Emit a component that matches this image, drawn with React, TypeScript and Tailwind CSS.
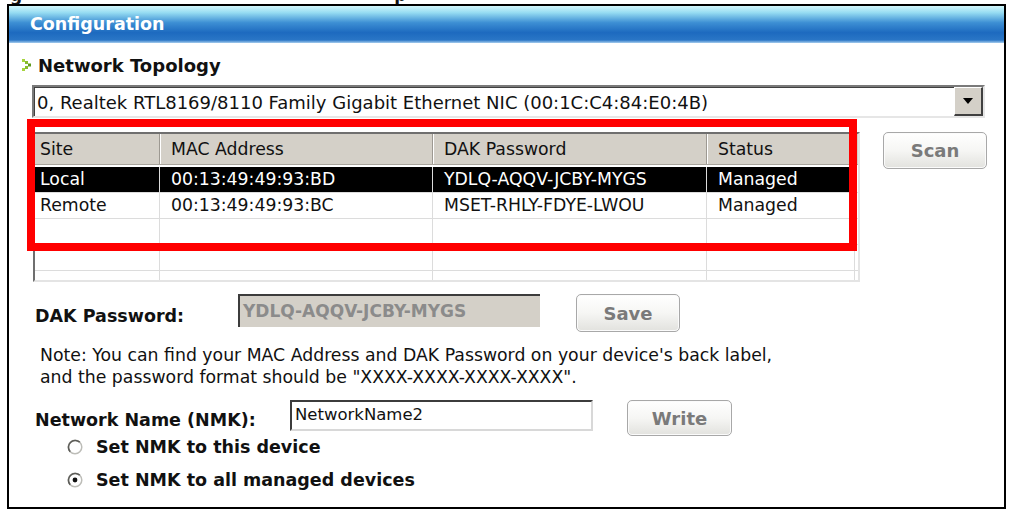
import React from "react";

type Device = {
  site: string;
  mac: string;
  dak: string;
  status: string;
  selected?: boolean;
};

const devices: Device[] = [
  { site: "Local", mac: "00:13:49:49:93:BD", dak: "YDLQ-AQQV-JCBY-MYGS", status: "Managed", selected: true },
  { site: "Remote", mac: "00:13:49:49:93:BC", dak: "MSET-RHLY-FDYE-LWOU", status: "Managed" },
];

function XpButton({ label, className }: { label: string; className: string }) {
  return (
    <button
      className={`flex items-center justify-center rounded-[5px] border border-[#a8a8a8] bg-gradient-to-b from-white via-[#f6f6f4] to-[#e2e2de] text-[18px] font-bold text-[#7a7a7a] shadow-[inset_0_0_0_1px_#fbfbfb] ${className}`}
    >
      {label}
    </button>
  );
}

function Radio({ checked }: { checked?: boolean }) {
  return (
    <svg width="16" height="16" viewBox="0 0 16 16" className="shrink-0">
      <circle cx="8" cy="8" r="6.8" fill="#fff" stroke="#bdbdb8" strokeWidth="1.5" />
      <path d="M3.2 12.8 A6.8 6.8 0 0 1 12.8 3.2" fill="none" stroke="#5c5c58" strokeWidth="1.6" />
      {checked && <circle cx="8" cy="8" r="2.4" fill="#111" />}
    </svg>
  );
}

function TopologyIcon() {
  return (
    <svg width="10" height="12" viewBox="0 0 10 12" className="shrink-0">
      <rect x="0" y="0" width="3" height="3" fill="#a6d43e" />
      <rect x="3" y="2" width="3" height="3" fill="#86bc2c" />
      <rect x="6" y="4.5" width="3" height="3" fill="#5e9a1c" />
      <rect x="3" y="7" width="3" height="3" fill="#86bc2c" />
      <rect x="0" y="9" width="3" height="3" fill="#a6d43e" />
    </svg>
  );
}

function HeaderCell({ label, className }: { label: string; className: string }) {
  return (
    <div
      className={`flex h-full items-center pt-[2px] border-r border-r-[#9d9992] shadow-[1px_0_0_#ffffff] ${className}`}
    >
      {label}
    </div>
  );
}

function DeviceRow({ device }: { device?: Device }) {
  const sel = device?.selected;
  const cell = `flex h-full items-center border-r border-r-[#dcdcdc] ${sel ? "bg-black text-white" : ""}`;
  return (
    <div className="flex h-[26px] shrink-0 border-b border-b-[#dcdcdc]">
      <div className={`${cell} w-[125px] pl-[5px]`}>{device?.site}</div>
      <div className={`${cell} w-[273px] pl-[11px]`}>{device?.mac}</div>
      <div className={`${cell} w-[274px] pl-[11px]`}>{device?.dak}</div>
      <div className={`${cell} w-[148px] pl-[11px]`}>{device?.status}</div>
      <div className="flex-1" />
    </div>
  );
}

export default function App() {
  return (
    <div className="relative h-[512px] w-[1012px] overflow-hidden bg-white font-['DejaVu_Sans',Verdana,sans-serif] text-[17.3px] text-[#111]">
      {/* tail of the caption line above the panel */}
      <div className="flex h-[4px] overflow-hidden text-[17px] font-bold leading-none">
        <span className="-mt-[13px] ml-[10px]">g</span>
        <span className="-mt-[13px] ml-[372px]">p</span>
      </div>

      <div className="ml-[7px] flex h-[505px] w-[999px] flex-col border-2 border-black">
        {/* title bar */}
        <div className="flex h-[37px] shrink-0 items-center bg-[linear-gradient(to_bottom,#d2f6fb_0%,#96dcf2_18%,#3d8fd4_45%,#1d6abf_72%,#2a76c6_92%,#a6cdee_100%)] pl-[21px] text-[17.5px] font-bold text-white">
          Configuration
        </div>

        <div className="flex flex-1 flex-col">
          {/* Network Topology */}
          <div className="mt-[11px] flex h-[22px] items-center gap-[6px] pl-[13px] text-[18px] font-bold">
            <TopologyIcon />
            <span>Network Topology</span>
          </div>

          {/* adapter dropdown */}
          <div className="ml-[23px] mt-[9px] flex h-[33px] w-[953px] border-2 border-[#7a7a7a] border-b-[#e6e6e6] border-r-[#e6e6e6] bg-white">
            <div className="flex flex-1 items-center border-l border-t border-[#404040] pl-[2px] text-[18px]">
              0, Realtek RTL8169/8110 Family Gigabit Ethernet NIC (00:1C:C4:84:E0:4B)
            </div>
            <div className="flex w-[29px] items-center justify-center border-b-2 border-r-2 border-[#404040] border-l-white border-t-white bg-[#d4d0c8] border-l border-t">
              <svg width="10" height="6" viewBox="0 0 10 6">
                <path d="M0 0 H10 L5 6 Z" fill="#000" />
              </svg>
            </div>
          </div>

          {/* device list + scan */}
          <div className="mt-[14px] flex items-start">
            <div className="ml-[24px] flex h-[150px] w-[827px] flex-col overflow-hidden border-2 border-[#6f6f6f] border-b-[#e4e4e4] border-r-[#e4e4e4] bg-white">
              <div className="flex h-[31px] shrink-0 border-b border-b-[#a9a59d] bg-[#d4d0c8]">
                <HeaderCell label="Site" className="w-[125px] pl-[5px]" />
                <HeaderCell label="MAC Address" className="w-[273px] pl-[11px]" />
                <HeaderCell label="DAK Password" className="w-[274px] pl-[11px]" />
                <HeaderCell label="Status" className="w-[148px] pl-[11px]" />
                <div className="flex-1" />
              </div>
              <div className="h-[2px] shrink-0" />
              {devices.map((d) => (
                <DeviceRow key={d.mac} device={d} />
              ))}
              <DeviceRow />
              <DeviceRow />
              <DeviceRow />
            </div>
            <XpButton label="Scan" className="ml-[23px] h-[37px] w-[104px]" />
          </div>

          {/* DAK password */}
          <div className="mt-[12px] flex items-start">
            <div className="ml-[26px] mt-[9px] w-[203px] text-[17.5px] font-bold">DAK Password:</div>
            <div className="flex h-[33px] w-[302px] items-center border-l-2 border-t-2 border-[#3c3c3c] bg-[#d4d0c8] pl-[3px] text-[17px] font-bold text-[#8b8b8b]">
              YDLQ-AQQV-JCBY-MYGS
            </div>
            <XpButton label="Save" className="ml-[36px] h-[38px] w-[104px]" />
          </div>

          {/* note */}
          <div className="ml-[31px] mt-[12px] leading-[22px]">
            <p>Note: You can find your MAC Address and DAK Password on your device's back label,</p>
            <p>and the password format should be "XXXX-XXXX-XXXX-XXXX".</p>
          </div>

          {/* network name */}
          <div className="mt-[12px] flex items-start">
            <div className="ml-[26px] mt-[7px] w-[255px] text-[17.5px] font-bold">Network Name (NMK):</div>
            <div className="flex h-[31px] w-[303px] items-center border-2 border-[#3c3c3c] border-b-[#d8d8d8] border-r-[#d8d8d8] bg-white pl-[3px] text-[16.5px]">
              NetworkName2
            </div>
            <XpButton label="Write" className="ml-[34px] h-[36px] w-[105px]" />
          </div>

          {/* NMK target */}
          <div className="ml-[58px] mt-[1px] flex flex-col gap-[13px] text-[17.5px] font-bold">
            <label className="flex h-[20px] items-center gap-[13px]">
              <Radio />
              <span>Set NMK to this device</span>
            </label>
            <label className="flex h-[20px] items-center gap-[13px]">
              <Radio checked />
              <span>Set NMK to all managed devices</span>
            </label>
          </div>
        </div>
      </div>

      {/* red highlight around the device list */}
      <div className="absolute left-[27px] top-[119px] h-[132px] w-[830px] border-[8px] border-[#f00]" />
    </div>
  );
}
